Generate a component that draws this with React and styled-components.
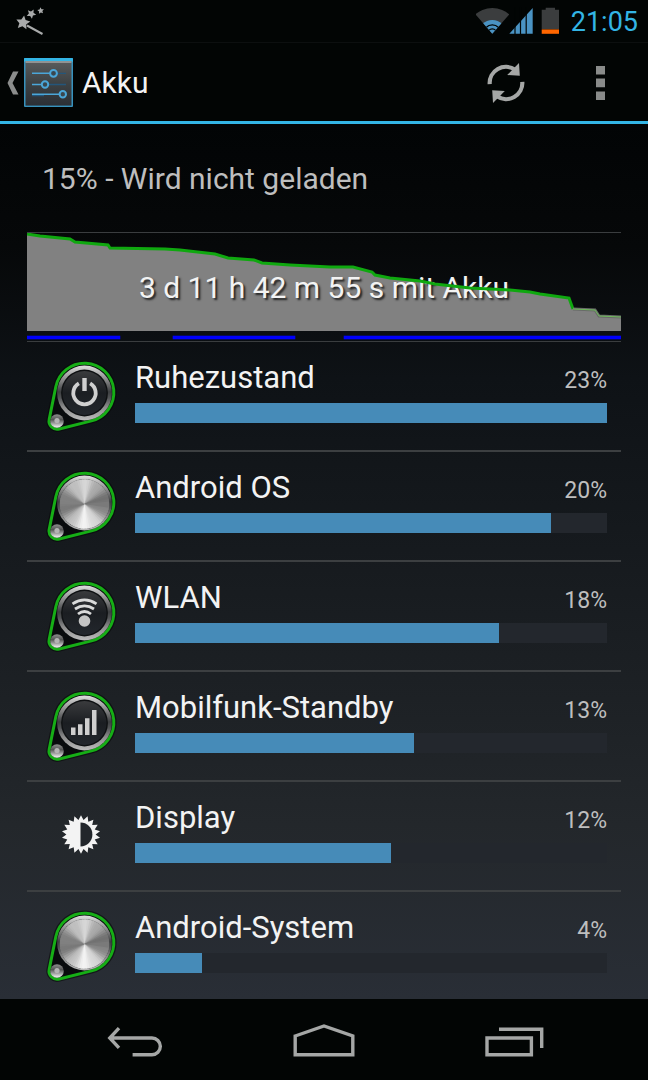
import React from 'react';
import styled, { createGlobalStyle } from 'styled-components';

const GlobalStyle = createGlobalStyle`
  body {
    margin: 0;
    background: #020504;
    font-family: Roboto, "Noto Sans", sans-serif;
  }
  * {
    box-sizing: border-box;
  }
`;

const Screen = styled.div`
  display: flex;
  flex-direction: column;
  height: 100vh;
  overflow: hidden;
  color: #f3f3f3;
  font-size: 30px;
  line-height: 36px;
`;

const StatusBar = styled.div`
  display: flex;
  flex: none;
  align-items: center;
  height: 42px;
  padding: 0 10px 0 16px;
  background: #020504;
`;

const StatusIcons = styled.div`
  display: flex;
  align-items: center;
  margin-left: auto;
`;

const Clock = styled.time`
  margin-left: 10px;
  color: #33b5e5;
  font-size: 27px;
  line-height: 34px;
  padding-top: 2px;
`;

const ActionBar = styled.header`
  display: flex;
  flex: none;
  align-items: center;
  justify-content: space-between;
  height: 82px;
  padding: 2px 1px 0 0;
  background: #020504;
  border-top: 1px solid #0c0f0f;
  border-bottom: 3px solid #33b5e5;
`;

const PlainButton = styled.button`
  display: flex;
  align-items: center;
  justify-content: center;
  padding: 0;
  border: 0;
  background: none;
  color: inherit;
  font: inherit;
  cursor: pointer;
`;

const UpButton = styled(PlainButton)`
  padding-left: 7px;
  gap: 5px;
`;

const Title = styled.h1`
  margin: 0 0 0 4px;
  font-size: 30px;
  font-weight: 400;
  line-height: 36px;
`;

const Actions = styled.div`
  display: flex;
`;

const ActionButton = styled(PlainButton)`
  width: 94px;
  height: 76px;
`;

const Content = styled.main`
  flex: 1;
  min-height: 0;
  overflow: hidden;
  padding: 0 27px;
  background: linear-gradient(#020405 0%, #060809 14%, #0e1216 29%, #191d21 56%, #23272b 80%, #292e36 100%);
`;

const Summary = styled.p`
  margin: 0;
  padding: 37px 15px 35px;
  color: #bebebe;
`;

const History = styled.section`
  border-top: 1px solid #3a3d3f;
  border-bottom: 1px solid #3a3d3f;
`;

const Graph = styled.div`
  display: grid;
  height: 98px;

  > * {
    grid-area: 1 / 1;
  }
`;

const GraphLayer = styled.svg`
  display: block;
  width: 100%;
  height: 98px;
`;

const Duration = styled.p`
  align-self: end;
  margin: 0 0 25px;
  text-align: center;
  text-shadow: 2px 2px 2px #222;
`;

const Timeline = styled.svg`
  display: block;
  width: 100%;
  height: 10px;
`;

const UsageList = styled.ul`
  margin: 0;
  padding: 0;
  list-style: none;
`;

const UsageRow = styled.li`
  display: flex;
  gap: 18px;
  height: 110px;
  padding: 18px 14px 0 18px;
  border-bottom: 2px solid #3c3f41;
`;

const UsageInfo = styled.div`
  flex: 1;
`;

const UsageHead = styled.div`
  display: flex;
  justify-content: space-between;
  margin-bottom: 7px;
`;

const UsageName = styled.span`
  font-size: 31px;
`;

const Percent = styled.span`
  height: 36px;
  color: #bebebe;
  font-size: 23px;
  line-height: 42px;
`;

const Track = styled.div`
  height: 20px;
  background: #23272d;
`;

const Bar = styled.div`
  height: 20px;
  background: #468bb8;
`;

const NavBar = styled.nav`
  display: flex;
  flex: none;
  padding: 16px 40px 17px;
  background: #020504;
`;

const NavButton = styled(PlainButton)`
  flex: 1;
`;

const level = [
  [0, 1], [13, 3], [43, 6], [48, 9], [81, 12], [83, 15], [138, 16], [153, 17],
  [188, 21], [201, 25], [227, 27], [235, 30], [263, 32], [303, 34], [326, 34],
  [345, 39], [348, 42], [363, 45], [393, 48], [408, 51], [443, 55], [483, 57],
  [503, 59], [513, 61], [542, 65], [546, 76], [568, 77], [572, 83], [594, 84],
];
const toPoints = (list) => list.map((p) => p.join(',')).join(' ');
const lowFrom = level.findIndex((p) => p[0] === 546);

const awake = [[0, 93], [146, 122], [317, 277]];

const usage = [
  { name: 'Ruhezustand', percent: 23, fill: 100, icon: 'power' },
  { name: 'Android OS', percent: 20, fill: 88.1, icon: 'metal' },
  { name: 'WLAN', percent: 18, fill: 77.2, icon: 'wifi' },
  { name: 'Mobilfunk-Standby', percent: 13, fill: 59.1, icon: 'cell' },
  { name: 'Display', percent: 12, fill: 54.2, icon: 'display' },
  { name: 'Android-System', percent: 4, fill: 14.1, icon: 'metal' },
];

const star = (cx, cy, outer, inner, tips, turn = 0) => {
  const points = [];
  for (let i = 0; i < tips * 2; i += 1) {
    const r = i % 2 ? inner : outer;
    const a = (Math.PI * i) / tips - Math.PI / 2 + turn;
    points.push(`${(cx + r * Math.cos(a)).toFixed(2)},${(cy + r * Math.sin(a)).toFixed(2)}`);
  }
  return points.join(' ');
};

const WandIcon = () => (
  <svg width="28" height="30" viewBox="16 6 28 30" fill="#a9abab" aria-hidden="true">
    <polygon points={star(23, 22.7, 7.4, 3.7, 5, 0.15)} />
    <polygon points={star(31.3, 13.8, 5, 2.4, 5, 0.5)} />
    <polygon points={star(40.7, 10.7, 3.5, 1.7, 5, -0.1)} />
    <path d="M27 25.5L42.5 34" stroke="#a9abab" strokeWidth="2" />
  </svg>
);

const StatusWifi = () => (
  <svg width="33" height="30" viewBox="1 0 33 30" aria-hidden="true">
    <clipPath id="fan">
      <path d="M17.3 27.7L-1 6.8V0H36V6.5Z" />
    </clipPath>
    <g clipPath="url(#fan)">
      <circle cx="17.3" cy="27.7" r="25.7" fill="#3b3d3e" />
      <circle cx="17.3" cy="27.7" r="13.8" fill="#4a93c3" />
      <circle cx="17.3" cy="27.7" r="8.8" fill="none" stroke="#020504" strokeWidth="1.4" />
      <circle cx="17.3" cy="27.7" r="4.8" fill="none" stroke="#020504" strokeWidth="1.2" />
    </g>
  </svg>
);

const StatusCell = () => (
  <svg width="24" height="28" viewBox="0 0 24 28" aria-hidden="true">
    <path d="M.3 26.7L23.7 1V26.7Z" fill="#4a93c3" />
    <path d="M6 0V28M11.5 0V28M17.2 0V28" stroke="#020504" strokeWidth="1.2" />
  </svg>
);

const BatteryIcon = styled.svg`
  margin-left: 8px;
`;

const StatusBattery = () => (
  <BatteryIcon width="20" height="28" viewBox="0 0 20 28" aria-hidden="true">
    <path d="M.7 2.7H4.7V.7H14V2.7H18V22H.7Z" fill="#3b3d3e" />
    <path d="M.7 22.4H18V26.8H.7Z" fill="#ff6600" />
  </BatteryIcon>
);

const SettingsIcon = () => (
  <svg width="49" height="50" viewBox="0 0 49 50" aria-hidden="true">
    <defs>
      <linearGradient id="panel" x1="0" y1="0" x2="0" y2="1">
        <stop offset="0" stopColor="#5a5c5d" />
        <stop offset=".5" stopColor="#3d4244" />
        <stop offset="1" stopColor="#2b2f35" />
      </linearGradient>
    </defs>
    <rect y="0" width="49" height="49" rx="1" fill="#3792bd" />
    <rect width="49" height="4" rx="1" fill="#33b5e5" />
    <rect x="1.5" y="3" width="46" height="44.6" fill="url(#panel)" />
    <path d="M1.5 4H47.5" stroke="#a3a6a6" strokeWidth="1.5" />
    <path d="M30 15.3H42M21 26.5H42M8 37.5H20" stroke="#24567a" strokeWidth="1.3" />
    <path d="M8 15.3H27M8 26.5H18M8 36.3H36" stroke="#4ba6d8" strokeWidth="1.6" />
    <g fill="#39474f" stroke="#4ba6d8" strokeWidth="2">
      <circle cx="29.5" cy="15.3" r="3.4" />
      <circle cx="21" cy="26.5" r="3.2" />
      <circle cx="38.8" cy="36.3" r="3.2" />
    </g>
  </svg>
);

const RefreshIcon = () => (
  <svg width="40" height="42" viewBox="-20 -21 40 42" aria-hidden="true">
    {[0, 180].map((turn) => (
      <g key={turn} transform={`rotate(${turn})`}>
        <path d="M-16.3 1.2A16.2 16.2 0 0 1 9 -13.3" fill="none" stroke="#a5a7a6" strokeWidth="4.2" />
        <path d="M13 -20L13.8 -7.3L1.2 -8Z" fill="#a5a7a6" />
      </g>
    ))}
  </svg>
);

// Brushed metal: overlapping wedges, bright towards the top and bottom
const wedges = Array.from({ length: 60 }, (_, i) => {
  const a = (i * Math.PI) / 30;
  const b = a + Math.PI / 12;
  const light = Math.abs(Math.sin(a + 0.12)) ** 1.8;
  const shade = Math.round(118 + 104 * light + 14 * Math.sin(a) + 8 * Math.cos(a * 8));
  return {
    d: `M0 0L${24.5 * Math.cos(a)} ${24.5 * Math.sin(a)}A24.5 24.5 0 0 1 ${24.5 * Math.cos(b)} ${24.5 * Math.sin(b)}Z`,
    fill: `rgb(${shade},${shade},${shade})`,
  };
});

const glyphs = {
  power: (
    <g fill="none" stroke="#d0d0d0" strokeWidth="3.8">
      <path d="M-5.6 -9.6A11.2 11.2 0 1 0 5.6 -9.6" />
      <path d="M0 -15V-2" strokeWidth="4.4" />
    </g>
  ),
  wifi: (
    <g fill="none" stroke="#dadada" strokeWidth="2.8">
      <path d="M-12 -9.2Q0 -17 12 -9.2" />
      <path d="M-9.5 -4Q0 -10.4 9.5 -4" />
      <path d="M-6.5 1Q0 -4 6.5 1" />
      <circle cx="0" cy="8" r="5.8" fill="#c4c4c4" stroke="none" />
    </g>
  ),
  cell: (
    <path
      d="M-13.5 12V4.5H-9V12ZM-6.5 12V1.2H-2V12ZM.5 12V-4.8H5V12ZM7.5 12V-13H12V12Z"
      fill="#cfcfcf"
    />
  ),
};

const outline = 'M10.8 26.7A29.3 29.3 0 1 1 46.5 60.9L14.2 69A8.2 8.2 0 0 1 4.2 59.4Z';

const KnobIcon = ({ type, id }) => (
  <svg width="72" height="72" viewBox="0 0 72 72" aria-hidden="true">
    <defs>
      <linearGradient id={`ring${id}`} x1="0" y1="0" x2="0" y2="1">
        <stop offset="0" stopColor="#dedede" />
        <stop offset=".25" stopColor="#8c8c8c" />
        <stop offset=".48" stopColor="#3c3e40" />
        <stop offset=".6" stopColor="#555759" />
        <stop offset=".75" stopColor="#8a8a8a" />
        <stop offset="1" stopColor="#bcbcbc" />
      </linearGradient>
      <linearGradient id={`face${id}`} x1="0" y1="0" x2="0" y2="1">
        <stop offset="0" stopColor="#3a3b3d" />
        <stop offset=".5" stopColor="#1b1e22" />
        <stop offset="1" stopColor="#23272d" />
      </linearGradient>
      <linearGradient id={`stud${id}`} x1="0" y1="0" x2="0" y2="1">
        <stop offset="0" stopColor="#8e8e8e" />
        <stop offset=".4" stopColor="#555" />
        <stop offset="1" stopColor="#fafafa" />
      </linearGradient>
    </defs>
    <path d={outline} fill="none" stroke="#060809" strokeWidth="5.4" opacity=".6" />
    <path d={outline} fill="#090b0d" stroke="#16ae16" strokeWidth="3" />
    <circle cx="12" cy="61" r="6.8" fill={`url(#stud${id})`} />
    <circle cx="12" cy="60.5" r="2.6" fill="#b4b4b4" />
    <g transform="translate(39.5 33)">
      <circle r="27.4" fill={`url(#ring${id})`} />
      {type === 'metal' ? (
        <>
          <circle cy="1" r="25" fill="#606263" />
          <g transform="translate(0 1)">
            {wedges.map((w) => <path key={w.d} d={w.d} fill={w.fill} />)}
          </g>
        </>
      ) : (
        <>
          <circle r="23.4" fill="#0e1012" />
          <circle r="22" fill={`url(#face${id})`} />
        </>
      )}
      {glyphs[type]}
    </g>
  </svg>
);

const DisplayIcon = () => (
  <svg width="72" height="72" viewBox="0 0 72 72" aria-hidden="true">
    <polygon points={star(36, 34.5, 19.3, 14.6, 18)} fill="#f3f3f3" />
    <path d="M35.5 22.6A11.9 11.9 0 0 1 35.5 46.4Z" fill="#22262b" />
  </svg>
);

const App = () => (
  <Screen>
    <GlobalStyle />
    <StatusBar>
      <WandIcon />
      <StatusIcons>
        <StatusWifi />
        <StatusCell />
        <StatusBattery />
        <Clock>21:05</Clock>
      </StatusIcons>
    </StatusBar>
    <ActionBar>
      <UpButton type="button">
        <svg width="12" height="26" viewBox="0 0 12 26" aria-hidden="true">
          <path d="M6 1.5H11.5L5.5 13L11.5 24.5H6L.5 13Z" fill="#8b8d8c" />
        </svg>
        <SettingsIcon />
        <Title>Akku</Title>
      </UpButton>
      <Actions>
        <ActionButton type="button" aria-label="Aktualisieren">
          <RefreshIcon />
        </ActionButton>
        <ActionButton type="button" aria-label="Weitere Optionen">
          <svg width="9" height="34" viewBox="0 0 9 34" aria-hidden="true">
            <path d="M0 0H9V8.4H0ZM0 12.6H9V21.2H0ZM0 25.4H9V34H0Z" fill="#898b8a" />
          </svg>
        </ActionButton>
      </Actions>
    </ActionBar>
    <Content>
      <Summary>15% - Wird nicht geladen</Summary>
      <History>
        <Graph>
          <GraphLayer viewBox="0 0 594 98" preserveAspectRatio="none" aria-hidden="true">
            <polygon points={`0,98 ${toPoints(level)} 594,98`} fill="#818181" />
          </GraphLayer>
          <Duration>3 d 11 h 42 m 55 s mit Akku</Duration>
          <GraphLayer viewBox="0 0 594 98" preserveAspectRatio="none" aria-hidden="true">
            <polyline points={toPoints(level.slice(0, lowFrom + 1))} fill="none" stroke="#0fa80f" strokeWidth="3" />
            <polyline points={toPoints(level.slice(lowFrom))} fill="none" stroke="#686b68" strokeWidth="3" />
            <polyline points={toPoints(level.slice(lowFrom))} fill="none" stroke="#6fba5c" strokeWidth="1" />
          </GraphLayer>
        </Graph>
        <Timeline viewBox="0 0 594 10" preserveAspectRatio="none" aria-hidden="true">
          {awake.map(([x, width]) => (
            <rect key={x} x={x} y="5" width={width} height="3" fill="#0000fb" stroke="#0000fb" strokeWidth="0.6" />
          ))}
        </Timeline>
      </History>
      <UsageList>
        {usage.map((item, i) => (
          <UsageRow key={item.name}>
            {item.icon === 'display' ? <DisplayIcon /> : <KnobIcon type={item.icon} id={i} />}
            <UsageInfo>
              <UsageHead>
                <UsageName>{item.name}</UsageName>
                <Percent>{`${item.percent}%`}</Percent>
              </UsageHead>
              <Track>
                <Bar style={{ width: `${item.fill}%` }} />
              </Track>
            </UsageInfo>
          </UsageRow>
        ))}
      </UsageList>
    </Content>
    <NavBar>
      <NavButton type="button" aria-label="Zurück">
        <svg width="64" height="48" viewBox="0 0 64 48" fill="none" stroke="#a5a7a6" strokeWidth="3.4" aria-hidden="true">
          <path d="M7 23H49A8.3 8.3 0 0 1 49 39.7H29.6M16 13.2L6.8 23L16 32.8" />
        </svg>
      </NavButton>
      <NavButton type="button" aria-label="Startseite">
        <svg width="64" height="48" viewBox="0 0 64 48" fill="none" stroke="#a5a7a6" strokeWidth="3.4" aria-hidden="true">
          <path d="M3.2 21L32 11L60.8 21V39.7H3.2Z" />
        </svg>
      </NavButton>
      <NavButton type="button" aria-label="Letzte Apps">
        <svg width="64" height="48" viewBox="0 0 64 48" fill="none" stroke="#a5a7a6" strokeWidth="3.4" aria-hidden="true">
          <path d="M6 23H50.4V39.7H6ZM18 14.3H60.7V33" />
        </svg>
      </NavButton>
    </NavBar>
  </Screen>
);

export default App;
